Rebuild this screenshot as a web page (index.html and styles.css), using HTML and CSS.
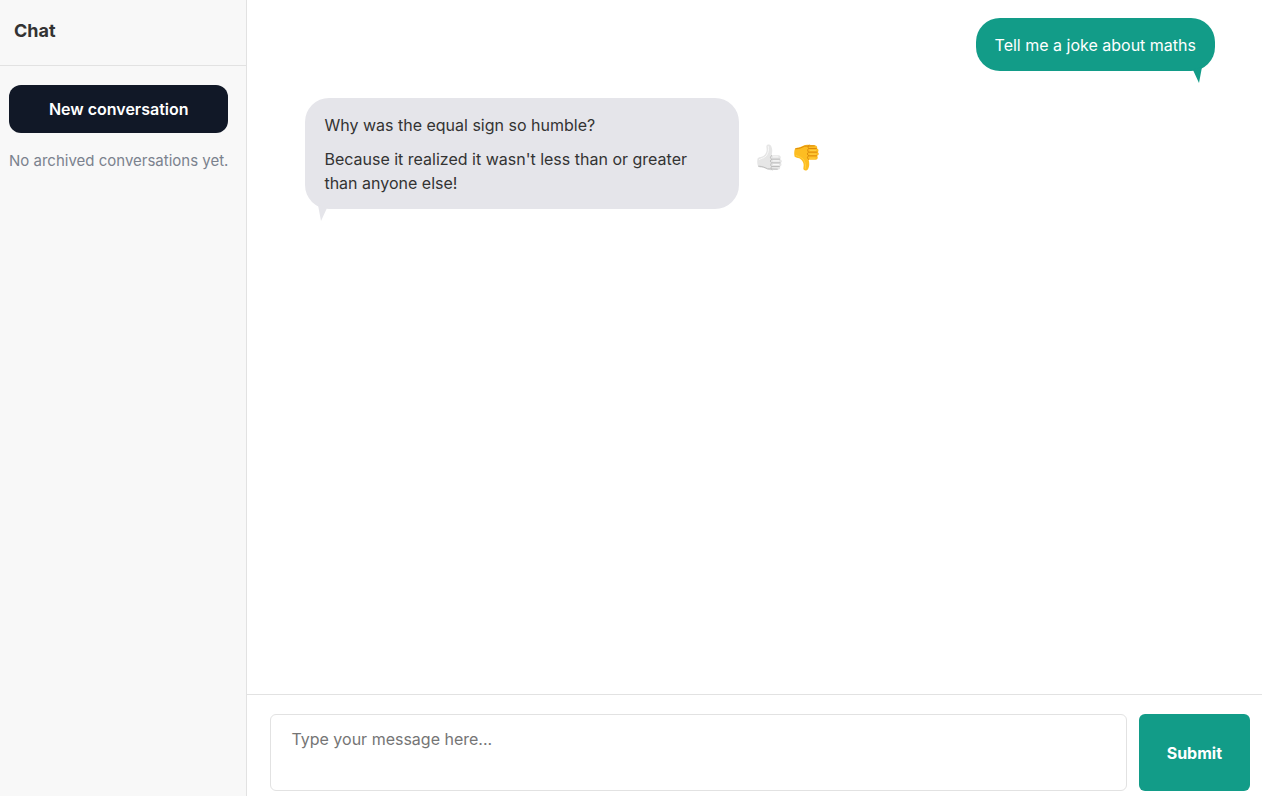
FILE: index.html
```html
<!DOCTYPE html>
<html lang="en">
<head>
  <meta charset="UTF-8" />
  <meta name="viewport" content="width=device-width, initial-scale=1" />
  <title>Chat</title>
  <link rel="stylesheet" href="styles.css">
</head>
<body>
  <!-- Shared hand shape for the feedback buttons -->
  <svg class="sprite" aria-hidden="true">
    <symbol id="thumb" viewBox="0 0 75 80">
      <path class="hand" d="M2 42 C8 38 15 39 20 35 C26 30 29 24 29 17 L28 6 C29 0 38 -1 42 5 C46 13 47 20 44 33 L65 33 C72 34 73 42 69 45 C76 47 76 54 71 56 C75 59 74 66 69 67 C71 72 68 77 62 77 L42 78 C31 79 25 72 17 71 C11 70 6 70 3 66 C0 59 0 49 2 42 Z" />
      <path class="crease" d="M44 34 C39 37 39 43 44 45 L68 45 M44 45 C39 48 39 54 44 56 L69 56 M44 56 C40 59 40 65 44 67 L67 67 M44 67 C41 70 41 75 45 77" />
      <path class="glow" d="M34 7 C36 17 34 27 27 36 C20 42 13 43 7 46 M49 38 L63 38 M49 50 L65 50 M49 61 L65 61" />
      <path class="shade" d="M5 66 C17 66 25 71 32 74 L61 75" />
    </symbol>
  </svg>
  <div class="app">
    <aside class="sidebar">
      <header class="sidebar-header">
        <h1>Chat</h1>
      </header>
      <div class="sidebar-content">
        <button type="button" class="new-conversation">New conversation</button>
        <p class="empty-note">No archived conversations yet.</p>
      </div>
    </aside>
    <main class="chat">
      <div class="messages">
        <div class="message message-user">
          <div class="bubble">
            <p>Tell me a joke about maths</p>
            <svg class="tail" viewBox="0 0 12 16" aria-hidden="true"><path d="M0 3 L2 3 L8 16 L11 0 Z" /></svg>
          </div>
        </div>
        <div class="message message-bot">
          <div class="bubble">
            <p>Why was the equal sign so humble?</p>
            <p>Because it realized it wasn't less than or greater than anyone else!</p>
            <svg class="tail" viewBox="0 0 12 16" aria-hidden="true"><path d="M0 3 L2 3 L8 16 L11 0 Z" /></svg>
          </div>
          <div class="feedback">
            <button type="button" class="thumb-up" aria-label="Good answer"><svg><use href="#thumb" /></svg></button>
            <button type="button" class="thumb-down" aria-label="Bad answer"><svg><use href="#thumb" /></svg></button>
          </div>
        </div>
      </div>
      <form class="composer">
        <textarea name="message" aria-label="Message" placeholder="Type your message here..."></textarea>
        <button type="submit">Submit</button>
      </form>
    </main>
  </div>
</body>
</html>
```
FILE: styles.css
```css
* {
  box-sizing: border-box;
}
body {
  margin: 0;
  font-family: Inter, "Liberation Sans", sans-serif;
  font-size: 16px;
  line-height: 24px;
  color: #333;
  background-color: #fff;
}
h1, p {
  margin: 0;
}
button {
  font: inherit;
  border: none;
  padding: 0;
  cursor: pointer;
}
.sprite {
  position: absolute;
  width: 0;
  height: 0;
}
.app {
  display: flex;
  height: 100vh;
}

/* Sidebar */
.sidebar {
  flex: none;
  background-color: #f8f8f8;
  border-right: 1px solid #e2e2e2;
}
.sidebar-header {
  padding: 19px 14px 22px;
  border-bottom: 1px solid #e2e2e2;
}
.sidebar-header h1 {
  font-size: 18px;
  line-height: 24px;
  font-weight: 700;
}
.sidebar-content {
  padding: 19px 18px 19px 9px;
}
.new-conversation {
  display: block;
  width: 100%;
  padding: 12px;
  border-radius: 12px;
  background-color: #111827;
  color: #fff;
  font-weight: 600;
}
.empty-note {
  margin-top: 16px;
  font-size: 15px;
  color: #7b828e;
}

/* Conversation */
.chat {
  flex: 1;
  min-width: 0;
  display: flex;
  flex-direction: column;
}
.messages {
  flex: 1;
  overflow-y: auto;
  display: flex;
  flex-direction: column;
  gap: 27px;
  padding: 18px 47px 18px 58px;
}
.message {
  display: flex;
  align-items: center;
  gap: 18px;
}
.message-user {
  justify-content: flex-end;
}
.bubble {
  position: relative;
  max-width: 434px;
  padding: 15px 19px 14px;
  border-radius: 24px;
}
.bubble p + p {
  margin-top: 10px;
}
.message-user .bubble {
  background-color: #129c88;
  color: #fff;
}
.message-bot .bubble {
  background-color: #e5e5ea;
}
.tail {
  position: absolute;
  right: 12px;
  bottom: -12px;
  width: 12px;
  height: 16px;
  fill: #129c88;
}
.message-bot .tail {
  right: auto;
  left: 12px;
  fill: #e5e5ea;
  transform: scaleX(-1);
}

/* Feedback buttons */
.feedback {
  display: flex;
  gap: 12px;
  padding-top: 8px;
}
.feedback button {
  background: none;
}
.feedback svg {
  display: block;
  width: 25px;
  height: 27px;
}
.hand {
  fill: var(--hand);
}
.crease, .glow, .shade {
  fill: none;
  stroke-width: 3;
  stroke-linecap: round;
}
.crease, .shade {
  stroke: var(--crease);
}
.glow {
  stroke: var(--glow);
}
.thumb-up {
  --hand: #e6e6e6;
  --crease: #bdbdbd;
  --glow: #f8f8f8;
}
.thumb-down {
  --hand: #fdbd22;
  --crease: #dc8a0b;
  --glow: #ffcf3f;
}
.thumb-down svg {
  transform: scaleY(-1);
}

/* Composer */
.composer {
  display: flex;
  gap: 12px;
  padding: 19px 12px 5px 23px;
  border-top: 1px solid #e2e2e2;
}
.composer textarea {
  flex: 1;
  min-width: 0;
  height: 77px;
  padding: 12px 20px;
  border: 1px solid #e2e2e2;
  border-radius: 6px;
  font: inherit;
  color: inherit;
  resize: none;
}
.composer textarea::placeholder {
  color: #757575;
}
.composer button {
  padding: 0 28px;
  border-radius: 6px;
  background-color: #129c88;
  color: #fff;
  font-weight: 700;
}
```
